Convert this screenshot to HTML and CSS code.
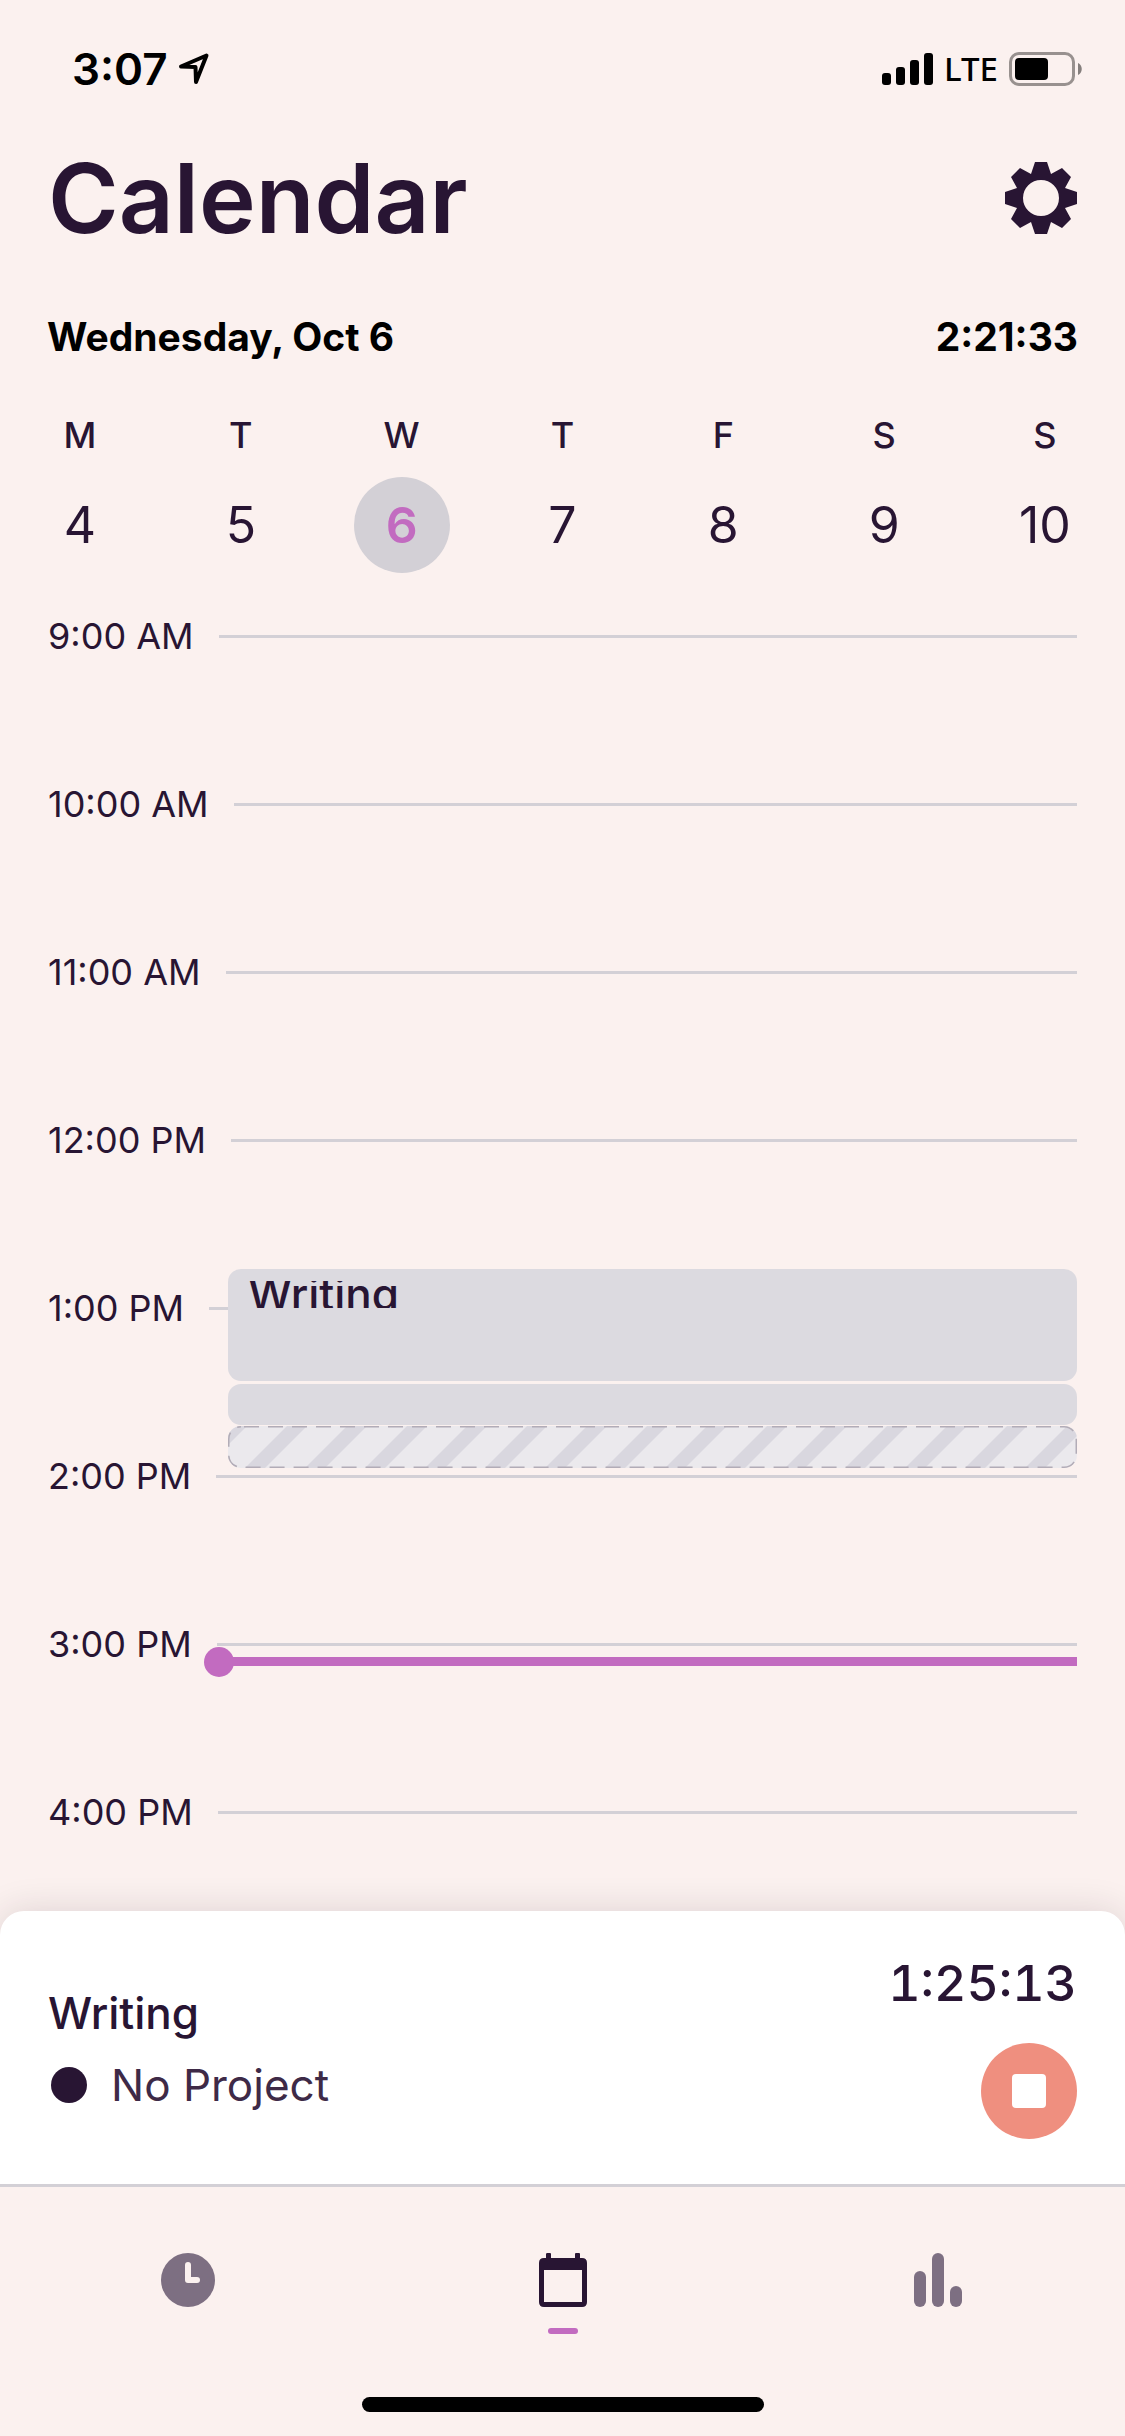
FILE: index.html
```html
<!DOCTYPE html>
<html lang="en">
<head>
<meta charset="utf-8">
<meta name="viewport" content="width=device-width">
<title>Calendar</title>
<link rel="stylesheet" href="styles.css">
</head>
<body>
<div class="app">
  <div class="status">
    <div class="status-side">
      <span class="clock">3:07</span>
      <svg class="location" viewBox="0 0 32 32" width="32" height="32" aria-hidden="true"><path d="M28.500 2.500 3 13.500 17.500 14 18 29z" fill="none" stroke="#000" stroke-width="4" stroke-linejoin="round"/></svg>
    </div>
    <div class="status-side status-right">
      <svg viewBox="0 0 51 32" width="51" height="32" aria-hidden="true"><rect y="20" width="9" height="12" rx="3"/><rect x="14" y="14" width="9" height="18" rx="3"/><rect x="28" y="7" width="9" height="25" rx="3"/><rect x="42" width="9" height="32" rx="3"/></svg>
      <span class="network">LTE</span>
      <svg viewBox="0 0 74 34" width="74" height="34" aria-hidden="true"><rect x="1.500" y="1.500" width="63" height="31" rx="8.500" fill="none" stroke="#98918f" stroke-width="3"/><rect x="6" y="6" width="33" height="22" rx="4"/><path d="M69 11c5 2 5 10 0 12z" fill="#857f7d"/></svg>
    </div>
  </div>

  <header class="header">
    <h1>Calendar</h1>
    <button class="settings" type="button" aria-label="Settings">
      <svg viewBox="-36 -36 72 72" width="72" height="72" aria-hidden="true"><path fill="#281533" fill-rule="evenodd" d="M-6-36H6L10-24 21-30 30-21 24-10 36-6V6L24 10 30 21 21 30 10 24 6 36H-6L-10 24-21 30-30 21-24 10-36 6V-6L-24-10-30-21-21-30-10-24zM18 0A18 18 0 1 0-18 0 18 18 0 1 0 18 0z"/></svg>
    </button>
  </header>

  <main class="main">
    <div class="summary"><span>Wednesday, Oct 6</span><span>2:21:33</span></div>

    <div class="week">
      <button class="day" type="button"><span class="weekday">M</span><span class="date">4</span></button>
      <button class="day" type="button"><span class="weekday">T</span><span class="date">5</span></button>
      <button class="day selected" type="button" aria-pressed="true"><span class="weekday">W</span><span class="date">6</span></button>
      <button class="day" type="button"><span class="weekday">T</span><span class="date">7</span></button>
      <button class="day" type="button"><span class="weekday">F</span><span class="date">8</span></button>
      <button class="day" type="button"><span class="weekday">S</span><span class="date">9</span></button>
      <button class="day" type="button"><span class="weekday">S</span><span class="date">10</span></button>
    </div>

    <div class="schedule">
      <ol class="hours">
        <li>9:00 AM</li>
        <li>10:00 AM</li>
        <li>11:00 AM</li>
        <li>12:00 PM</li>
        <li>1:00 PM</li>
        <li>2:00 PM</li>
        <li>3:00 PM</li>
        <li>4:00 PM</li>
      </ol>
      <div class="events">
        <div class="event event-long"><div class="event-title">Writing</div></div>
        <div class="event event-short"></div>
        <div class="event-running">
          <svg width="100%" height="100%" aria-hidden="true">
            <defs>
              <pattern id="stripes" width="60" height="42" patternUnits="userSpaceOnUse">
                <path d="M59 0H79L37 42H17zM-1 0H19L-23 42H-43z" fill="#d9d7df"/>
              </pattern>
            </defs>
            <rect width="100%" height="100%" fill="url(#stripes)"/>
            <rect width="100%" height="100%" rx="13" fill="none" stroke="#b2acb7" stroke-width="3" stroke-dasharray="15 9" stroke-dashoffset="-3"/>
          </svg>
        </div>
      </div>
      <div class="now"></div>
    </div>
  </main>

  <section class="timer">
    <div class="entry">
      <div class="entry-title">Writing</div>
      <div class="project"><span class="project-dot"></span>No Project</div>
    </div>
    <div class="running">
      <div class="elapsed">1:25:13</div>
      <button class="stop" type="button" aria-label="Stop timer"><span class="stop-square"></span></button>
    </div>
  </section>

  <nav class="nav">
    <div class="tabs">
      <a class="tab" href="#timer" aria-label="Timer">
        <svg viewBox="0 0 54 54" width="54" height="54" aria-hidden="true"><circle cx="27" cy="27" r="27" fill="#7d6f82"/><path d="M27 12V27H36" fill="none" stroke="#fbf1ef" stroke-width="6" stroke-linecap="round" stroke-linejoin="round"/></svg>
      </a>
      <a class="tab current" href="#calendar" aria-label="Calendar" aria-current="page">
        <svg viewBox="0 0 54 54" width="54" height="54" aria-hidden="true"><path fill="#281533" fill-rule="evenodd" d="M11.500 0H14Q15 0 15 1V5H39V1Q39 0 40 0H43Q44 0 44 1V5H46Q51 5 51 10V49Q51 54 46 54H8Q3 54 3 49V10Q3 5 8 5H10V1Q10 0 11.500 0zM8 17V49H46V17z"/></svg>
      </a>
      <a class="tab" href="#reports" aria-label="Reports">
        <svg viewBox="0 0 54 54" width="54" height="54" aria-hidden="true"><g fill="#7d6f82"><rect x="3" y="18" width="12" height="36" rx="6"/><rect x="21" width="12" height="54" rx="6"/><rect x="39" y="33" width="12" height="21" rx="6"/></g></svg>
      </a>
    </div>
    <div class="home-indicator"></div>
  </nav>
</div>
</body>
</html>
```
FILE: styles.css
```css
* {
  box-sizing: border-box;
}

body {
  margin: 0;
  background: #fbf1ef;
  color: #281533;
  font-family: Inter, "Liberation Sans", sans-serif;
}

button {
  padding: 0;
  border: 0;
  background: none;
  color: inherit;
  font: inherit;
}

svg {
  display: block;
}

.app {
  display: flex;
  flex-direction: column;
  min-height: 100vh;
}

/* Status bar */
.status {
  display: flex;
  align-items: center;
  justify-content: space-between;
  height: 138px;
  padding: 0 42px 0 72px;
  color: #000;
}

.status-side {
  display: flex;
  align-items: center;
  gap: 10px;
}

.status-right {
  gap: 11px;
}

.clock {
  font-size: 44px;
  font-weight: 600;
}

.network {
  font-family: "Noto Sans", sans-serif;
  font-size: 33px;
  font-weight: 500;
  line-height: 48px;
}

/* Title */
.header {
  display: flex;
  align-items: center;
  justify-content: space-between;
  height: 120px;
  padding: 0 48px;
}

h1 {
  margin: 0;
  font-size: 96px;
  font-weight: 600;
  line-height: 120px;
}

.main {
  display: flex;
  flex: 1;
  flex-direction: column;
}

.summary {
  display: flex;
  justify-content: space-between;
  padding: 55px 47px 0;
  color: #000;
  font-size: 39px;
  font-weight: 700;
  line-height: 48px;
}

/* Week strip */
.week {
  display: flex;
  justify-content: space-between;
  padding: 50px 32px 39px;
}

.day {
  display: flex;
  flex-direction: column;
  align-items: center;
  gap: 18px;
  width: 96px;
}

.weekday {
  font-size: 36px;
  font-weight: 500;
  line-height: 48px;
}

.date {
  width: 96px;
  border-radius: 50%;
  font-size: 50px;
  line-height: 96px;
}

.selected .date {
  background: #d3d0d6;
  color: #c26bc0;
  font-weight: 600;
}

/* Day schedule */
.schedule {
  position: relative;
  flex: 1;
  padding: 0 48px 74px;
}

.hours {
  display: flex;
  flex-direction: column;
  gap: 119px;
  margin: 0;
  padding: 0;
  list-style: none;
}

.hours li {
  display: flex;
  align-items: center;
  gap: 25px;
  font-size: 36px;
  line-height: 49px;
}

.hours li::after {
  flex: 1;
  height: 3px;
  background: #d3d0d6;
  content: "";
}

.events {
  position: absolute;
  top: 657px;
  right: 48px;
  left: 228px;
}

.event {
  border-radius: 13px;
  background: #dcdae0;
}

.event-long {
  height: 112px;
  margin-bottom: 3px;
  padding: 12px 20px;
}

.event-title {
  height: 27px;
  overflow: hidden;
  font-size: 44px;
  font-weight: 500;
  line-height: 27px;
}

.event-short {
  height: 41px;
  margin-bottom: 1px;
}

.event-running {
  height: 42px;
  overflow: hidden;
  border-radius: 13px;
  background: #ebe9ed;
}

.now {
  position: absolute;
  top: 1034px;
  right: 48px;
  left: 204px;
  display: flex;
  align-items: center;
  height: 31px;
}

.now::before {
  width: 30px;
  height: 30px;
  border-radius: 50%;
  background: #c26bc0;
  content: "";
}

.now::after {
  flex: 1;
  height: 9px;
  margin-left: -8px;
  background: #c26bc0;
  content: "";
}

/* Running timer */
.timer {
  position: relative;
  display: flex;
  align-items: center;
  justify-content: space-between;
  padding: 48px 48px 45px;
  border-radius: 24px 24px 0 0;
  background: #fff;
  box-shadow: 0 0 36px rgba(40, 30, 40, 0.14);
}

.entry {
  display: flex;
  flex-direction: column;
  gap: 24px;
  font-size: 44px;
  line-height: 48px;
}

.entry-title {
  font-weight: 500;
}

.project {
  display: flex;
  align-items: center;
  gap: 24px;
  padding-left: 3px;
  color: #3e2a47;
}

.project-dot {
  width: 36px;
  height: 36px;
  border-radius: 50%;
  background: #281533;
}

.running {
  display: flex;
  flex-direction: column;
  align-items: flex-end;
  gap: 36px;
}

.elapsed {
  font-size: 50px;
  font-weight: 500;
  font-variant-numeric: tabular-nums;
  line-height: 48px;
}

.stop {
  display: flex;
  align-items: center;
  justify-content: center;
  width: 96px;
  height: 96px;
  border-radius: 50%;
  background: #ef8f7f;
}

.stop-square {
  width: 34px;
  height: 34px;
  border-radius: 4px;
  background: #fff;
}

/* Bottom navigation */
.nav {
  position: relative;
  padding-bottom: 24px;
  border-top: 3px solid #d3d0d6;
  background: #fbf1ef;
}

.tabs {
  display: grid;
  grid-template-columns: repeat(3, 1fr);
  padding-top: 66px;
}

.tab {
  display: flex;
  flex-direction: column;
  align-items: center;
  gap: 21px;
}

.tab::after {
  width: 30px;
  height: 6px;
  border-radius: 3px;
  content: "";
}

.current::after {
  background: #c26bc0;
}

.home-indicator {
  width: 402px;
  height: 15px;
  margin: 63px auto 0;
  border-radius: 8px;
  background: #000;
}
```
